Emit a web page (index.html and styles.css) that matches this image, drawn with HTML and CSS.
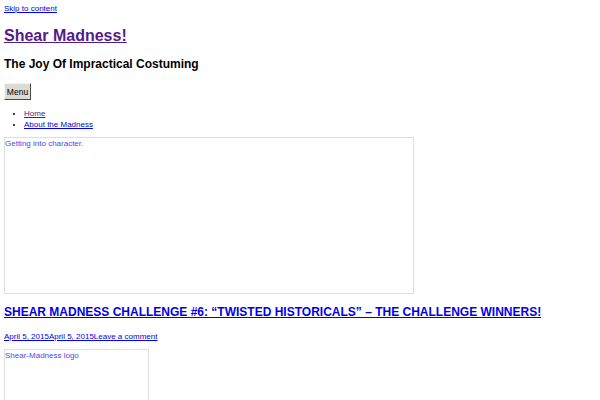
FILE: index.html
```html
<!DOCTYPE html>
<html>
<head>
<meta charset="utf-8">
<link rel="stylesheet" href="styles.css">
</head>
<body>
<a class="skip" href="#content">Skip to content</a>
<header class="site-header">
  <h1 class="site-title"><a class="visited" href="#">Shear Madness!</a></h1>
  <h2 class="site-description">The Joy Of Impractical Costuming</h2>
  <nav class="main-nav">
    <button class="menu-toggle">Menu</button>
    <ul class="menu">
      <li><a class="visited" href="#">Home</a></li>
      <li><a href="#">About the Madness</a></li>
    </ul>
  </nav>
</header>
<main id="content">
  <a class="img-box hero" href="#">Getting into character.</a>
  <h2 class="entry-title"><a href="#">Shear Madness Challenge #6: “Twisted Historicals” – The Challenge Winners!</a></h2>
  <div class="entry-meta"><a href="#">April 5, 2015</a><a href="#">April 5, 2015</a><a href="#">Leave a comment</a></div>
  <div class="img-box logo">Shear-Madness logo</div>
</main>
</body>
</html>
```
FILE: styles.css
```css
html, body {
  margin: 0;
  padding: 0;
  background: #fff;
}
body {
  padding: 4px;
  font-family: "Liberation Sans", Arial, sans-serif;
  font-size: 8px;
  color: #000;
}
a {
  color: #0000ee;
}
a.visited {
  color: #551a8b;
}
.skip {
  display: block;
  line-height: 9px;
}
.site-title {
  margin: 13px 0 0;
  font-size: 16px;
  font-weight: bold;
  line-height: 19px;
}
.site-description {
  margin: 12px 0 0;
  font-size: 12px;
  font-weight: bold;
  line-height: 14px;
}
.main-nav {
  margin-top: 12px;
}
.menu-toggle {
  display: block;
  font-family: "Liberation Sans", Arial, sans-serif;
  font-size: 8.5px;
  padding: 0;
  background: #dcdad5;
  border: 1px solid;
  border-color: #f4f4f4 #4a4a4a #4a4a4a #f4f4f4;
  color: #000;
  height: 17px;
  width: 27px;
}
.menu {
  margin: 8px 0 0;
  padding-left: 20px;
  line-height: 11px;
}
.img-box {
  display: block;
  box-sizing: border-box;
  border: 1px solid #dedede;
  color: #4a4ae8;
  text-decoration: none;
  padding: 1px 0 0 0;
  font-size: 8px;
  line-height: 9px;
}
.hero {
  margin-top: 7px;
  width: 410px;
  height: 157px;
}
.entry-title {
  margin: 10px 0 0;
  font-size: 12px;
  font-weight: bold;
  text-transform: uppercase;
  line-height: 16px;
}
.entry-meta {
  margin-top: 12px;
  line-height: 10px;
}
.logo {
  margin-top: 7px;
  width: 145px;
  height: 80px;
}
```
